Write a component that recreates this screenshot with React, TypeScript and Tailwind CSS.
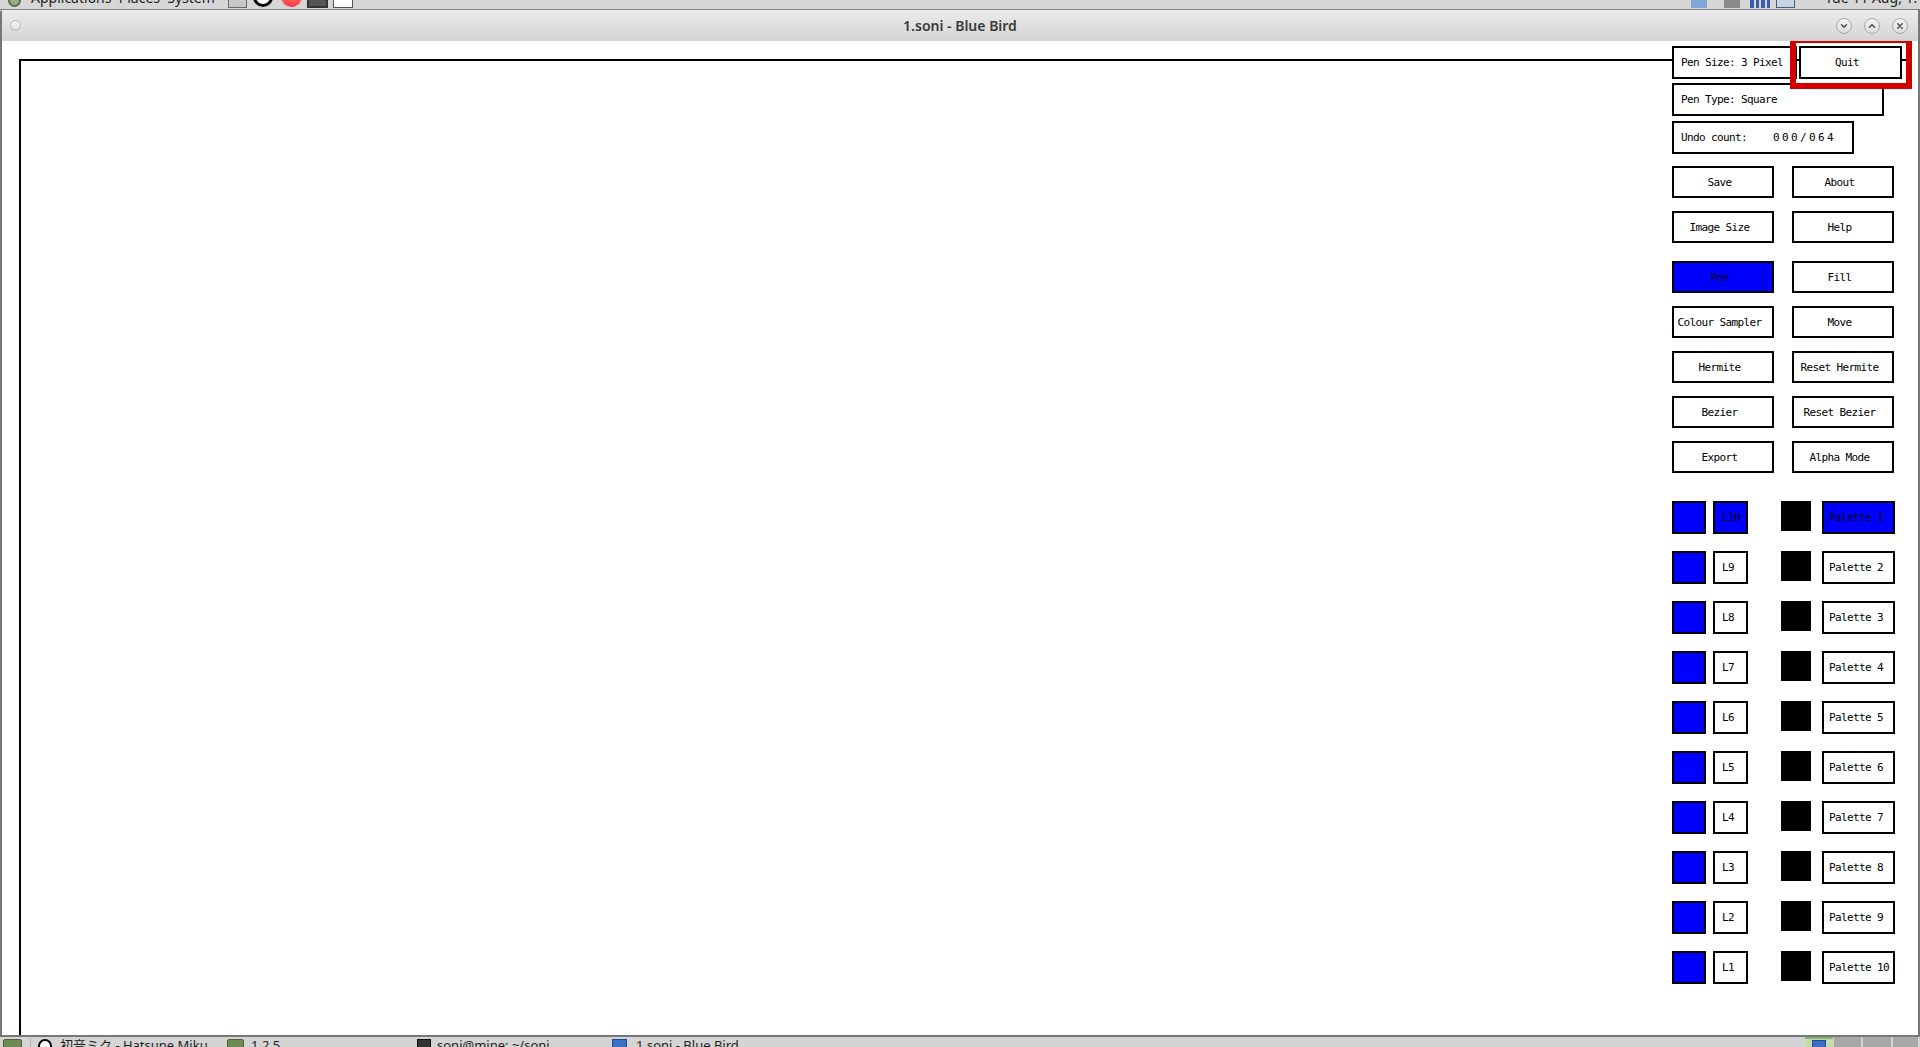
import React from "react";

const mono =
  "font-['DejaVu_Sans_Mono',monospace] text-[11px] tracking-[-0.62px] leading-none text-black whitespace-nowrap";

function Btn({ label, blue = false }: { label: string; blue?: boolean }) {
  return (
    <div
      className={`w-[102px] h-[32px] border-2 border-black flex items-center justify-center pr-[7px] ${
        blue ? "bg-[#0000ff]" : "bg-white"
      } ${mono}`}
    >
      {label}
    </div>
  );
}

function Ctrl({ kind }: { kind: "down" | "up" | "x" }) {
  return (
    <div className="w-[16px] h-[16px] rounded-full border border-[#a9a9a9] bg-linear-to-b from-[#f4f4f4] to-[#dcdcdc] flex items-center justify-center">
      <svg width="8" height="8" viewBox="0 0 8 8" fill="none" stroke="#4a4a4a" strokeWidth="1.4" strokeLinecap="round">
        {kind === "down" && <path d="M1.5 2.8 L4 5.3 L6.5 2.8" />}
        {kind === "up" && <path d="M1.5 5.2 L4 2.7 L6.5 5.2" />}
        {kind === "x" && <path d="M1.8 1.8 L6.2 6.2 M6.2 1.8 L1.8 6.2" />}
      </svg>
    </div>
  );
}

export default function App() {
  const gridRows: { a: string; b: string; blueA?: boolean; extra?: boolean }[] = [
    { a: "Save", b: "About" },
    { a: "Image Size", b: "Help" },
    { a: "Pen", b: "Fill", blueA: true, extra: true },
    { a: "Colour Sampler", b: "Move" },
    { a: "Hermite", b: "Reset Hermite" },
    { a: "Bezier", b: "Reset Bezier" },
    { a: "Export", b: "Alpha Mode" },
  ];
  const layers = ["L10", "L9", "L8", "L7", "L6", "L5", "L4", "L3", "L2", "L1"];
  const sans = "font-['Noto_Sans','Noto_Sans_CJK_JP',sans-serif]";

  return (
    <div className="w-[1920px] h-[1047px] overflow-hidden flex flex-col bg-[#d6d6d6]">
      {/* top gnome panel (cut off) */}
      <div className={`h-[10px] shrink-0 border-b border-[#858585] bg-[#d6d6d6] overflow-hidden flex items-end ${sans}`}>
        <div className="ml-[8px] mb-[2px] w-[13px] h-[16px] rounded-full border-2 border-[#5c6b4a] bg-[#9aa88a] shrink-0" />
        <div className="ml-[10px] h-[20px] leading-[20px] mb-[1px] text-[14px] text-[#1e1e1e] whitespace-nowrap shrink-0 w-[197px]">
          Applications&nbsp;&nbsp;Places&nbsp;&nbsp;System
        </div>
        <div className="mb-[1px] w-[19px] h-[20px] border border-[#6a6a6a] bg-[#c8c8c8] shrink-0" />
        <div className="ml-[6px] mb-[2px] w-[20px] h-[20px] rounded-full border-[3px] border-black bg-white shrink-0" />
        <div className="ml-[8px] mb-[2px] w-[21px] h-[21px] rounded-full bg-linear-to-b from-[#ff9a3c] to-[#ff2a55] shrink-0" />
        <div className="ml-[5px] mb-[1px] w-[21px] h-[20px] border-2 border-[#333] bg-[#555] shrink-0" />
        <div className="ml-[5px] mb-[1px] w-[20px] h-[20px] border border-[#555] bg-white shrink-0" />
        <div className="flex-1" />
        <div className="mb-[1px] w-[16px] h-[18px] bg-[#7fa6d8] shrink-0" />
        <div className="ml-[17px] mb-[1px] w-[16px] h-[18px] bg-[#8a8a8a] shrink-0" />
        <div className="ml-[10px] mb-[1px] w-[20px] h-[18px] flex gap-[2px] items-end shrink-0">
          <div className="w-[4px] h-[18px] bg-[#3a5db0]" />
          <div className="w-[4px] h-[18px] bg-[#3a5db0]" />
          <div className="w-[4px] h-[18px] bg-[#3a5db0]" />
          <div className="w-[4px] h-[18px] bg-[#3a5db0]" />
        </div>
        <div className="ml-[6px] mb-[1px] w-[19px] h-[18px] border border-[#4a5a7a] bg-[#c9d3e6] shrink-0" />
        <div className="ml-[30px] w-[95px] h-[20px] leading-[20px] mb-[1px] text-[14px] text-[#1e1e1e] whitespace-nowrap shrink-0">
          Tue 11 Aug, 1:15 PM
        </div>
      </div>

      {/* window */}
      <div className="flex-1 min-h-0 flex flex-col border-x-2 border-b-2 border-[#777777] bg-white rounded-tl-[3px]">
        <div className="h-[31px] shrink-0 bg-linear-to-b from-[#ececec] to-[#d4d4d4] grid grid-cols-[1fr_auto_1fr] items-center">
          <div className="flex items-center">
            <div className="ml-[8px] w-[11px] h-[11px] rounded-full border border-[#b4b4b4] bg-linear-to-b from-[#f6f6f6] to-[#dedede]" />
          </div>
          <div className={`text-[14px] font-semibold text-[#3a3a3a] ${sans}`}>1.soni - Blue Bird</div>
          <div className="flex items-center justify-end gap-[12px] pr-[10px]">
            <Ctrl kind="down" />
            <Ctrl kind="up" />
            <Ctrl kind="x" />
          </div>
        </div>

        <div className="flex-1 min-h-0 relative overflow-hidden bg-white">
          {/* drawing canvas */}
          <div className="ml-[17px] mt-[18px] w-[1888px] h-[1200px] border-t-2 border-l-2 border-black" />

          {/* control panel lying over the canvas */}
          <div className="absolute left-[1670px] top-[5px] flex flex-col">
            <div className="relative flex">
              <div className={`w-[125px] h-[33px] border-2 border-black bg-white flex items-center pl-[7px] ${mono}`}>
                Pen Size: 3 Pixel
              </div>
              <div className={`ml-[2px] w-[103px] h-[33px] border-2 border-black bg-white flex items-center justify-center pr-[7px] ${mono}`}>
                Quit
              </div>
              <div className="absolute left-[118px] top-[-9px] w-[122px] h-[52px] border-[6px] border-[#d40000]" />
            </div>
            <div className={`mt-[4px] w-[212px] h-[33px] border-2 border-black bg-white flex items-center pl-[7px] ${mono}`}>
              Pen Type: Square
            </div>
            <div className={`mt-[5px] w-[182px] h-[33px] border-2 border-black bg-white flex items-center pl-[7px] ${mono}`}>
              Undo count:
              <span className="ml-[26px] tracking-[2.38px]">000/064</span>
            </div>

            <div className="mt-[12px] flex flex-col gap-[13px]">
              {gridRows.map((r) => (
                <div key={r.a} className={`flex gap-[18px] ${r.extra ? "mt-[5px]" : ""}`}>
                  <Btn label={r.a} blue={r.blueA} />
                  <Btn label={r.b} />
                </div>
              ))}
            </div>

            <div className="mt-[28px] flex flex-col gap-[17px]">
              {layers.map((l, i) => (
                <div key={l} className="flex items-start h-[33px]">
                  <div className="w-[34px] h-[33px] border-2 border-black bg-[#0000ff]" />
                  <div
                    className={`ml-[7px] w-[35px] h-[33px] border-2 border-black flex items-center pl-[7px] ${
                      i === 0 ? "bg-[#0000ff]" : "bg-white"
                    } ${mono}`}
                  >
                    {l}
                  </div>
                  <div className="ml-[33px] w-[30px] h-[30px] bg-black" />
                  <div
                    className={`ml-[11px] w-[73px] h-[33px] border-2 border-black flex items-center pl-[5px] ${
                      i === 0 ? "bg-[#0000ff]" : "bg-white"
                    } ${mono}`}
                  >
                    Palette {i + 1}
                  </div>
                </div>
              ))}
            </div>
          </div>
        </div>
      </div>

      {/* bottom taskbar (cut off) */}
      <div className={`h-[10px] shrink-0 bg-[#d4d4d4] overflow-hidden flex items-start ${sans}`}>
        <div className="ml-[3px] mt-[2px] w-[19px] h-[14px] rounded-[2px] bg-[#6f8a52] border border-[#4d6337] shrink-0" />
        <div className="ml-[8px] mt-[1px] w-[1px] h-[9px] bg-[#b0b0b0] shrink-0" />
        <div className="ml-[7px] mt-[2px] w-[14px] h-[14px] rounded-full border-2 border-black bg-white shrink-0" />
        <div className="ml-[8px] pt-[2px] text-[13px] leading-none text-[#1e1e1e] whitespace-nowrap w-[160px] shrink-0">
          初音ミク - Hatsune Miku
        </div>
        <div className="ml-[7px] mt-[2px] w-[17px] h-[13px] rounded-[2px] bg-[#6f8a52] border border-[#4d6337] shrink-0" />
        <div className="ml-[7px] pt-[2px] text-[13px] leading-none text-[#1e1e1e] whitespace-nowrap w-[166px] shrink-0">
          1.2.5
        </div>
        <div className="mt-[2px] w-[14px] h-[13px] bg-[#333] border border-[#111] shrink-0" />
        <div className="ml-[6px] pt-[2px] text-[13px] leading-none text-[#1e1e1e] whitespace-nowrap w-[175px] shrink-0">
          soni@mine: ~/soni
        </div>
        <div className="mt-[2px] w-[15px] h-[13px] bg-[#3d6fc4] border border-[#1f4a94] shrink-0" />
        <div className="ml-[9px] pt-[2px] text-[13px] leading-none text-[#1e1e1e] whitespace-nowrap shrink-0">
          1.soni - Blue Bird
        </div>
        <div className="flex-1" />
        <div className="w-[28px] h-[10px] bg-[#c4dbab] border-t-2 border-[#8fb26c] flex justify-center shrink-0">
          <div className="mt-[1px] w-[14px] h-[10px] bg-[#3d6fc4] border border-[#1f4a94]" />
        </div>
        <div className="ml-[1px] w-[27px] h-[10px] bg-[#a8a8a8] shrink-0" />
        <div className="ml-[2px] w-[28px] h-[10px] bg-[#a8a8a8] shrink-0" />
        <div className="ml-[2px] w-[25px] h-[10px] bg-[#a8a8a8] shrink-0" />
        <div className="w-[2px] h-[10px] bg-[#d4d4d4] shrink-0" />
      </div>
    </div>
  );
}
